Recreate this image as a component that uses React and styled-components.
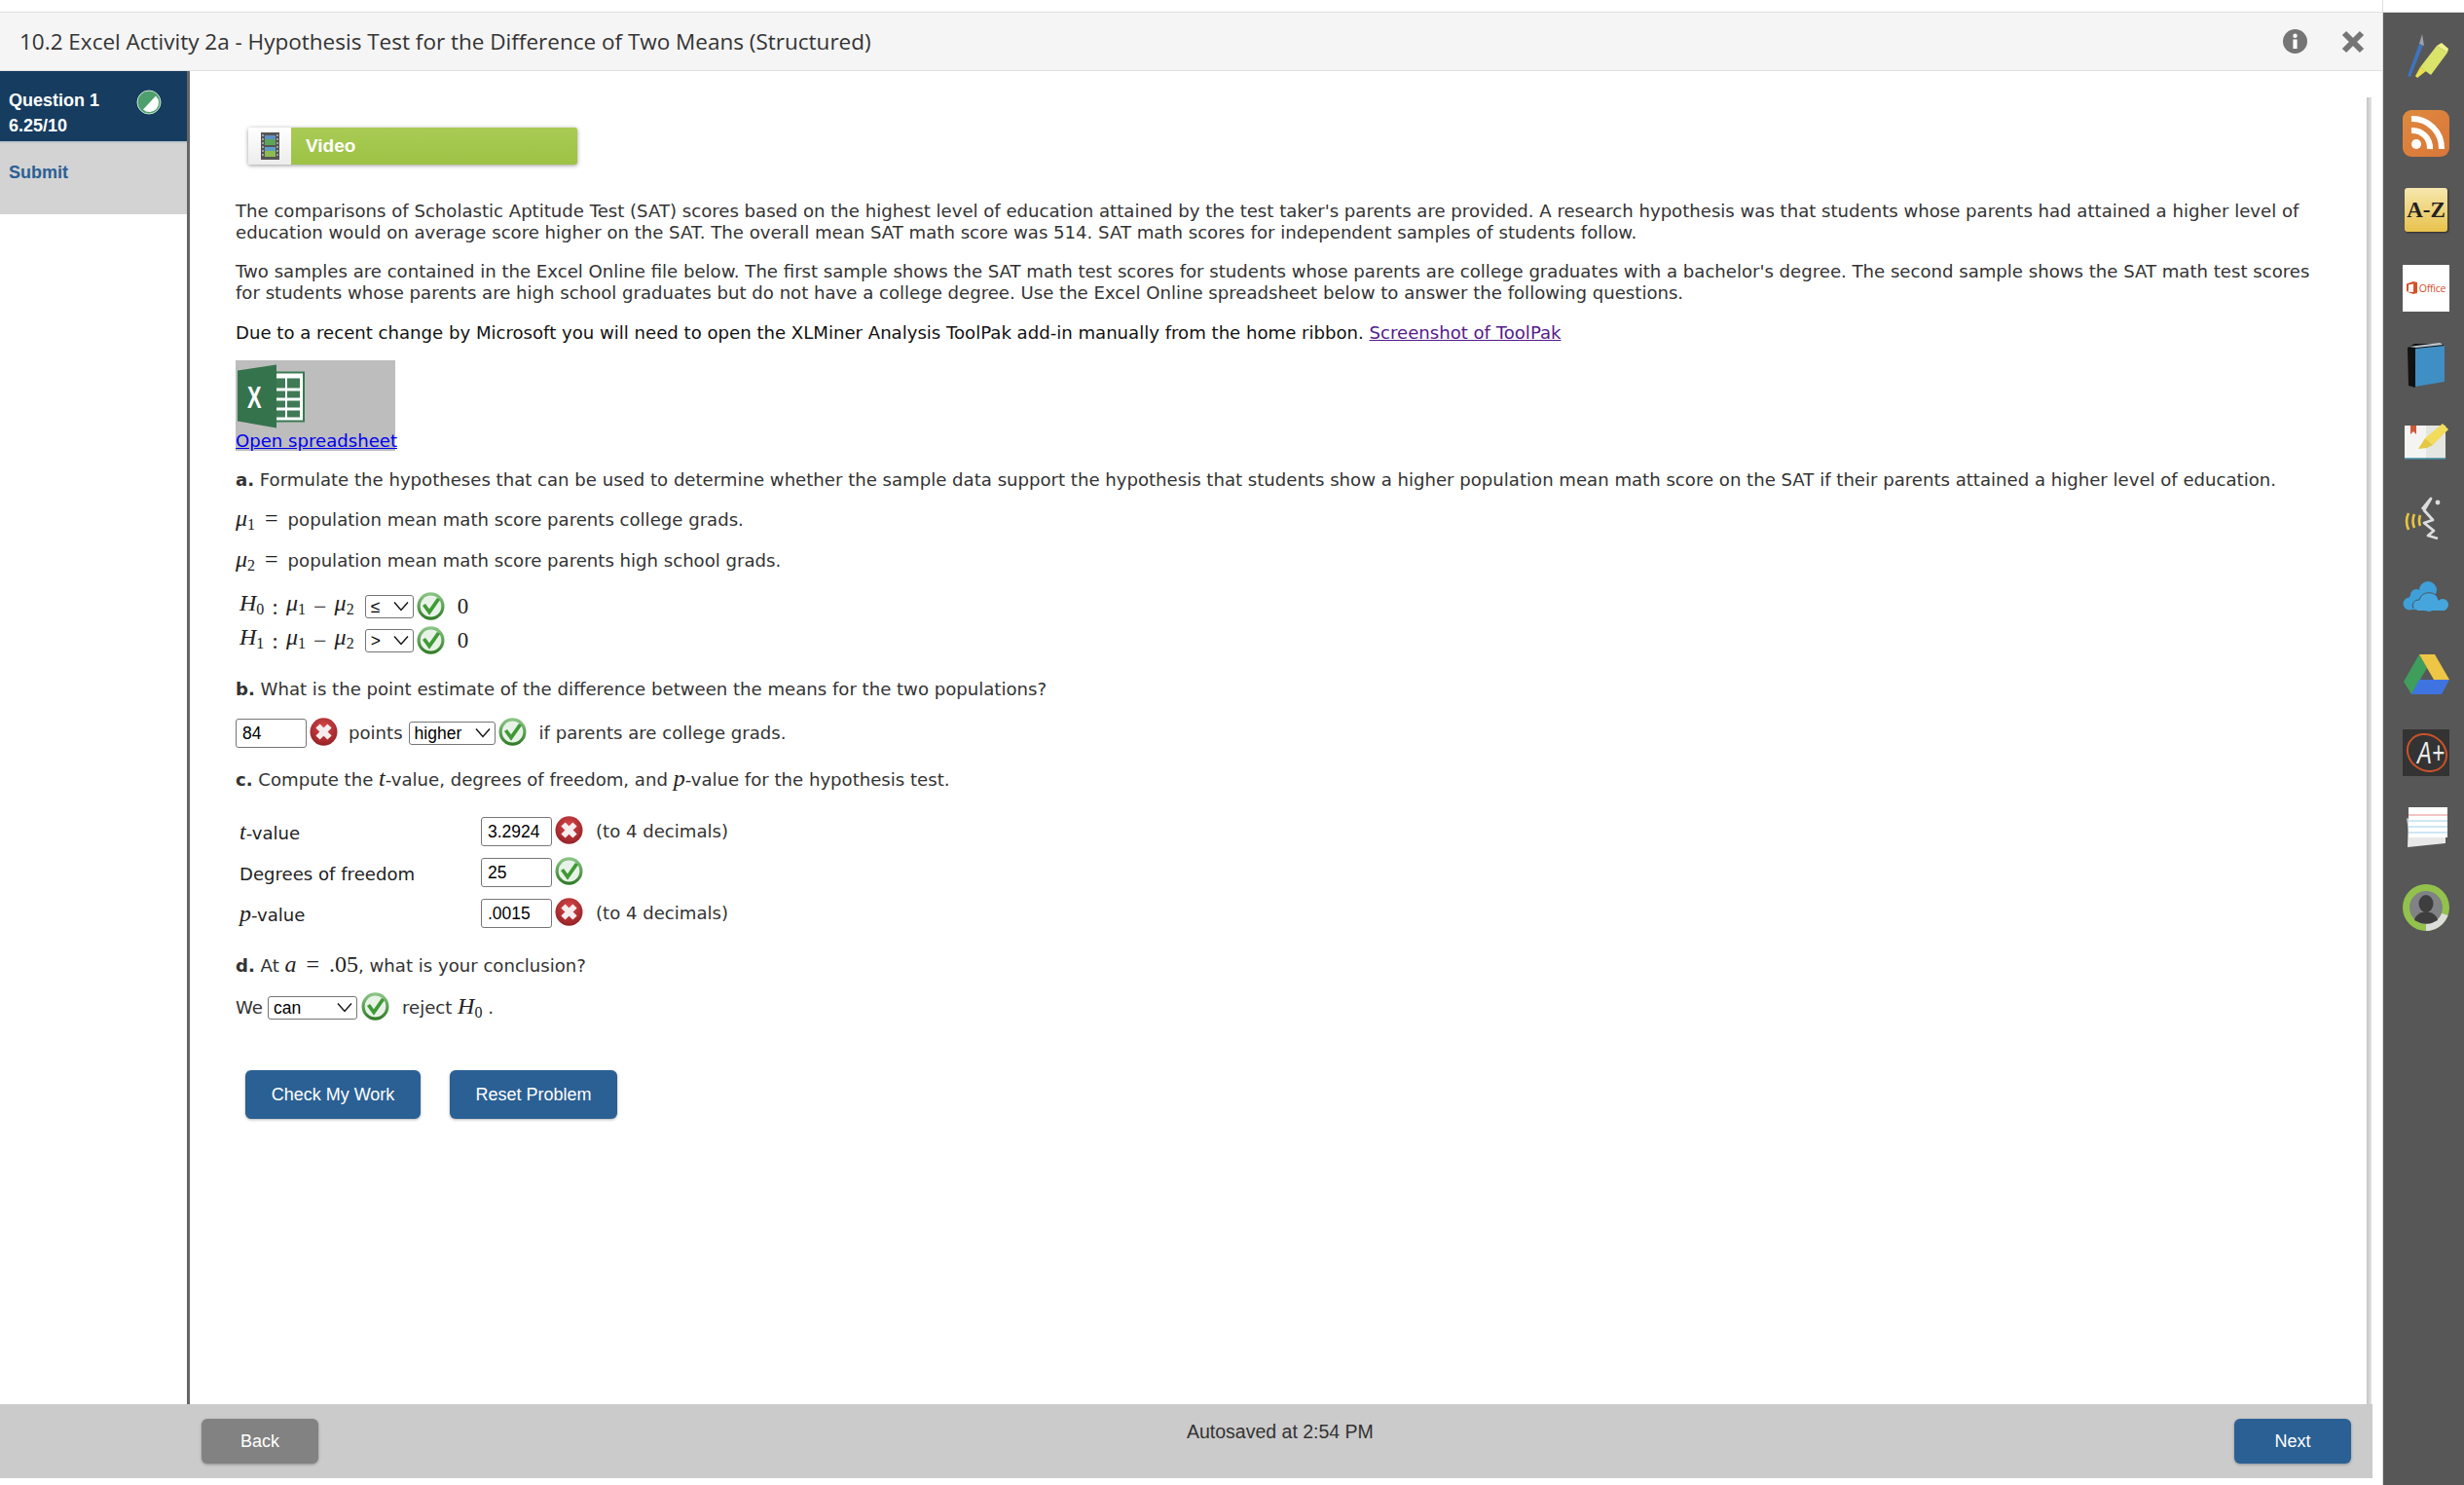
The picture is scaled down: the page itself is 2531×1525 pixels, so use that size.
import React from "react"
import styled, { createGlobalStyle } from "styled-components"

const GlobalStyle = createGlobalStyle`
html, body {
    margin: 0;
    padding: 0;
    background: #fff;
}
#root {
    height: 1525px;
}
`

const Page = styled.div`
display: flex;
width: 2531px;
height: 1525px;
overflow: hidden;
font-family: "DejaVu Sans", Verdana, sans-serif;
color: #333;
`
const Main = styled.div`
display: flex;
flex-direction: column;
width: 2447px;
padding-top: 12px;
box-sizing: border-box;
`
const TitleBar = styled.header`
display: flex;
align-items: center;
height: 61px;
box-sizing: border-box;
padding: 0 18px 0 20px;
background: #f5f5f5;
border-top: 1px solid #e0e0e0;
border-bottom: 1px solid #e0e0e0;
`
const Title = styled.h1`
flex: 1;
margin: 0;
font-family: "Open Sans", sans-serif;
font-size: 22.5px;
font-weight: 400;
color: #333;
`
const TitleActions = styled.div`
display: flex;
align-items: center;
gap: 35px;
`
const Body = styled.div`
flex: 1;
display: flex;
min-height: 0;
padding-right: 10px;
`
const Sidebar = styled.nav`
width: 192px;
border-right: 3px solid #666;
flex-shrink: 0;
`
const QuestionTab = styled.div`
position: relative;
height: 74px;
box-sizing: border-box;
padding: 17px 0 0 9px;
background: #163c60;
border-bottom: 2px solid #bdc5cc;
color: #fff;
font-family: "Liberation Sans", Arial, sans-serif;
font-size: 18px;
font-weight: 700;
line-height: 26px;
`
const TabStatus = styled.span`
position: absolute;
left: 140px;
top: 19px;
display: flex;
`
const SubmitTab = styled.div`
height: 73px;
box-sizing: border-box;
padding: 19px 0 0 9px;
background: #d3d3d3;
color: #2a6094;
font-family: "Liberation Sans", Arial, sans-serif;
font-size: 18px;
font-weight: 700;
line-height: 22px;
`
const Content = styled.main`
flex: 1;
min-width: 0;
padding: 58px 0 0 47px;
font-size: 18.1px;
line-height: 22px;
`
const ScrollTrack = styled.div`
width: 5px;
margin-top: 27px;
margin-right: 1px;
background: linear-gradient(to right, #c4c4c4, #e4e4e4);
`
const VideoButton = styled.div`
display: flex;
width: 338px;
height: 38px;
margin: 0 0 37px 13px;
border-radius: 2px;
overflow: hidden;
box-shadow: 0 1px 4px rgba(0, 0, 0, .4);
`
const VideoThumb = styled.div`
display: flex;
align-items: center;
justify-content: center;
width: 44px;
background: linear-gradient(#fff, #ececec);
`
const VideoLabel = styled.div`
flex: 1;
padding-left: 15px;
background: linear-gradient(#a9cb55, #9dc244);
color: #fff;
font-family: "Liberation Sans", Arial, sans-serif;
font-size: 19px;
font-weight: 700;
line-height: 37px;
`
const Para = styled.p`
margin: ${props => props.$top}px 0 0;
width: 2140px;
color: ${props => props.$dark ? "#111" : "#333"};
min-height: 22px;
`
const Visited = styled.a`
color: #551a8b;
text-decoration: underline;
`
const ExcelLink = styled.a`
display: block;
width: 164px;
height: 93px;
margin-top: 17px;
background: #bdbdbd;
color: #0000ee;
text-decoration: underline;
white-space: nowrap;
line-height: 24px;
`
const ExcelIcon = styled.svg`
display: block;
margin-left: 2px;
padding-top: 3px;
`
const MathText = styled.span`
font-family: "Liberation Serif", "Times New Roman", serif;
font-size: 24px;
line-height: 0;
color: #222;
font-style: ${props => props.$plain ? "normal" : "italic"};
`
const Sub = styled.sub`
font-style: normal;
font-size: 16px;
line-height: 0;
vertical-align: -4px;
`
const MathGap = styled.span`
font-family: "Liberation Serif", "Times New Roman", serif;
font-size: 24px;
line-height: 0;
font-style: normal;
margin: 0 ${props => props.$gap || 10}px;
color: #222;
`
const HypoRow = styled.div`
display: flex;
align-items: center;
height: 35px;
padding-left: 4px;
margin-top: ${props => props.$top || 0}px;
`
const ZeroValue = styled.span`
margin-left: 13px;
font-family: "Liberation Serif", "Times New Roman", serif;
font-size: 23px;
color: #222;
`
const AnswerRow = styled.div`
display: flex;
align-items: center;
height: ${props => props.$height}px;
margin-top: ${props => props.$top}px;
`
const SelectWrap = styled.span`
position: relative;
display: inline-flex;
width: ${props => props.$width}px;
height: 24px;
margin: ${props => props.$margin || "0"};
flex-shrink: 0;
`
const Select = styled.select`
appearance: none;
width: 100%;
height: 100%;
box-sizing: border-box;
padding: 0 0 0 5px;
background: #fff;
border: 1px solid #767676;
border-radius: 3px;
color: #000;
font-family: "Liberation Sans", Arial, sans-serif;
font-size: 17.5px;
`
const Chevron = styled.svg`
position: absolute;
right: 5px;
top: 6px;
pointer-events: none;
`
const Input = styled.input`
width: 73px;
height: 30px;
box-sizing: border-box;
padding: 0 6px;
border: 1px solid #767676;
border-radius: 3px;
color: #000;
font-family: "Liberation Sans", Arial, sans-serif;
font-size: 17.5px;
flex-shrink: 0;
`
const Mark = styled.svg`
display: block;
flex-shrink: 0;
margin-left: ${props => props.$left || 0}px;
margin-top: ${props => props.$rise ? -4 : 0}px;
`
const Words = styled.span`
margin-left: ${props => props.$left}px;
white-space: nowrap;
`
const ScoreTable = styled.div`
display: grid;
grid-template-columns: 252px 73px 32px auto;
grid-auto-rows: 30px;
row-gap: 12px;
align-items: center;
justify-items: start;
margin-top: 27px;
`
const ScoreLabel = styled.span`
padding: 4px 0 0 4px;
color: #222;
`
const ActionRow = styled.div`
display: flex;
gap: 30px;
margin: 52px 0 0 10px;
`
const Button = styled.button`
width: ${props => props.$width}px;
height: ${props => props.$height || 50}px;
padding: 0;
border: none;
border-radius: 6px;
background: ${props => props.$grey ? "#828282" : "#2a6094"};
box-shadow: 0 1px 3px rgba(0, 0, 0, .3);
color: #fff;
font-family: "Liberation Sans", Arial, sans-serif;
font-size: 18px;
`
const Footer = styled.footer`
display: flex;
align-items: flex-start;
justify-content: space-between;
height: 76px;
box-sizing: border-box;
margin-right: 10px;
padding: 15px 22px 0 207px;
background: #cbcbcb;
position: relative;
`
const Autosaved = styled.div`
position: absolute;
left: 1219px;
top: 17px;
font-family: "Liberation Sans", Arial, sans-serif;
font-size: 19.5px;
color: #333;
`
const BottomGap = styled.div`
height: 7px;
`
const Rail = styled.aside`
width: 84px;
border-left: 1px solid #ddd;
padding-top: 12px;
box-sizing: border-box;
`
const RailInner = styled.div`
display: flex;
flex-direction: column;
align-items: center;
gap: 31.55px;
height: 100%;
box-sizing: border-box;
padding: 20px 0 0 5px;
background: #575757;
border-top: 1px solid #ddd;
`
const RailIcon = styled.svg`
display: block;
width: 48px;
height: 48px;
flex-shrink: 0;
`
const AzTile = styled.div`
width: 44px;
height: 45px;
margin: 1px 0 2px;
flex-shrink: 0;
border-radius: 3px;
background: linear-gradient(#f6e7ae, #e8c24c);
box-shadow: 1px 1px 2px rgba(0, 0, 0, .5);
color: #222;
font-family: "Liberation Serif", serif;
font-size: 23px;
font-weight: 700;
line-height: 45px;
text-align: center;
`
const OfficeTile = styled.div`
display: flex;
align-items: center;
justify-content: center;
gap: 2px;
width: 48px;
height: 48px;
flex-shrink: 0;
background: #fff;
color: #d8502a;
font-family: "Open Sans", sans-serif;
font-size: 10.5px;
letter-spacing: -.2px;
`

const Check = (props) => (
    <Mark width="29" height="29" viewBox="0 0 29 29" $left={props.left} $rise={props.rise}>
        <defs>
            <linearGradient id="okRing" x1="0" y1="0" x2="0" y2="1">
                <stop offset="0" stopColor="#8fc78a" />
                <stop offset="1" stopColor="#2e7a24" />
            </linearGradient>
        </defs>
        <ellipse cx="14.5" cy="14.5" rx="14" ry="14.3" fill="url(#okRing)" />
        <ellipse cx="14.5" cy="14.5" rx="10.8" ry="11.1" fill="#e8f3e8" />
        <path d="M7.5 13 L13 20.5 L22.5 7" fill="none" stroke="#3f9a35" strokeWidth="3.8" />
    </Mark>
)

const Cross = (props) => (
    <Mark width="29" height="29" viewBox="0 0 29 29" $left={props.left} $rise={props.rise}>
        <defs>
            <radialGradient id="noFill" cx=".5" cy=".35" r=".75">
                <stop offset="0" stopColor="#d8484c" />
                <stop offset="1" stopColor="#8c1c20" />
            </radialGradient>
        </defs>
        <ellipse cx="14.5" cy="14.5" rx="14" ry="14.3" fill="url(#noFill)" />
        <path d="M8.5 8.5 L20.5 20.5 M20.5 8.5 L8.5 20.5" stroke="#f6eeee" strokeWidth="6" />
    </Mark>
)

const Pick = (props) => (
    <SelectWrap $width={props.width} $margin={props.margin}>
        <Select defaultValue={props.value}>
            <option>{props.value}</option>
        </Select>
        <Chevron width="16" height="11" viewBox="0 0 16 11">
            <path d="M1 1.5 L8 9.5 L15 1.5" fill="none" stroke="#111" strokeWidth="1.4" />
        </Chevron>
    </SelectWrap>
)

const Mu = (props) => <MathText>μ<Sub>{props.n}</Sub></MathText>

const Hypothesis = (props) => (
    <HypoRow $top={props.top}>
        <MathText>H<Sub>{props.n}</Sub></MathText>
        <MathGap $gap={8}>:</MathGap>
        <Mu n="1" />
        <MathGap $gap={8}>−</MathGap>
        <Mu n="2" />
        <Pick width={50} value={props.sign} margin="0 3px 0 11px" />
        <Check />
        <ZeroValue>0</ZeroValue>
    </HypoRow>
)

const FilmIcon = () => (
    <svg width="19" height="30" viewBox="0 0 19 30">
        <rect x="0" y="1" width="19" height="28" fill="#555" />
        <rect x="4" y="4" width="11" height="10" fill="#5da55a" />
        <rect x="4" y="4" width="11" height="4" fill="#5f8fc4" />
        <rect x="4" y="16" width="11" height="10" fill="#8dbb52" />
        <rect x="4" y="16" width="11" height="4" fill="#5f9ec4" />
        <path d="M2 3 V27 M17 3 V27" stroke="#bbb" strokeWidth="1.5" strokeDasharray="2 2" />
    </svg>
)

const SpreadsheetIcon = () => (
    <ExcelIcon width="69" height="68" viewBox="0 0 69 65">
        <rect x="33" y="8" width="35" height="50" fill="#fff" stroke="#3a7a52" strokeWidth="2" />
        <path d="M38 14 H64 V24 H38 Z M38 27 H64 V34 H38 Z M38 37 H64 V44 H38 Z M38 47 H64 V54 H38 Z" fill="#3f7a55" />
        <path d="M50 12 V56" stroke="#fff" strokeWidth="2" />
        <path d="M0 6 L40 0 V65 L0 58 Z" fill="#35734d" />
        <text transform="translate(10 44) scale(.78 1.15)" fill="#fff" fontFamily="Liberation Sans, sans-serif" fontSize="28" fontWeight="700">X</text>
    </ExcelIcon>
)

const RailIcons = () => (
    <RailInner>
        <RailIcon viewBox="0 0 48 48">
            <path d="M5 45 L17 12 L21 13.5 L8 46 Z" fill="#3f73bd" />
            <path d="M17 12 L20 2 L22 14 Z" fill="#9ba3ad" />
            <path d="M35 14 L46 21 L29 44 L18 36 Z" fill="#dbe46a" />
            <path d="M35 14 L40 11 L47 17 L46 21 Z" fill="#eef08a" />
            <path d="M18 36 L24 40 L15 47 L13 45 Z" fill="#e8e050" />
        </RailIcon>
        <RailIcon viewBox="0 0 48 48">
            <defs>
                <linearGradient id="rssBg" x1="0" y1="0" x2="1" y2="1">
                    <stop offset="0" stopColor="#de8a3e" />
                    <stop offset="1" stopColor="#d9763a" />
                </linearGradient>
            </defs>
            <rect width="48" height="48" rx="9" fill="url(#rssBg)" />
            <circle cx="14" cy="35" r="5" fill="#fff" />
            <path d="M9 21 A18 18 0 0 1 28 40" fill="none" stroke="#fff" strokeWidth="6" />
            <path d="M9 9 A30 30 0 0 1 40 40" fill="none" stroke="#fff" strokeWidth="6" />
        </RailIcon>
        <AzTile>A-Z</AzTile>
        <OfficeTile>
            <svg width="11" height="13" viewBox="0 0 11 13">
                <path d="M0 2.5 L7 0 L11 1 V12 L7 13 L0 10.5 L7 11 V2.5 L2 3.5 V9.5 L0 10.5 Z" fill="#d8502a" />
            </svg>
            Office
        </OfficeTile>
        <RailIcon viewBox="0 0 48 48">
            <path d="M5 6 L12 2 L42 2 V5 L13 8 V47 L6 45 Z" fill="#111" />
            <path d="M6 5 L38 1 L42 3 L14 6 Z" fill="#b9c4cc" />
            <path d="M13 7 L43 4 V41 L13 46 Z" fill="#3f8fc4" />
        </RailIcon>
        <RailIcon viewBox="0 0 48 48">
            <path d="M2 6 H24 V40 H2 Z" fill="#f4f4f2" />
            <path d="M24 6 H44 V40 H24 Z" fill="#e4e6e2" />
            <path d="M2 40 H44" stroke="#3f8aa0" strokeWidth="1.6" />
            <path d="M8 6 H14 V15 L11 12 L8 15 Z" fill="#d0583a" />
            <path d="M41 4 L47 10 L31 26 L23 19 Z" fill="#f2dc5c" />
            <path d="M23 19 L31 26 L25 29 L16 30 Z" fill="#e4c844" />
        </RailIcon>
        <RailIcon viewBox="0 0 48 48">
            <path d="M20 13 L29 2 L22 14 L31 24 L22 27 L32 35 L26 40 L36 43" fill="none" stroke="#ddd" strokeWidth="2.8" strokeLinejoin="round" />
            <circle cx="36" cy="6" r="2.4" fill="#ddd" />
            <path d="M6 17 Q2 25 6 34 M12 18 Q9 25 12 32 M18 19 Q16 25 18 30" fill="none" stroke="#e8c640" strokeWidth="2.6" />
        </RailIcon>
        <RailIcon viewBox="0 0 48 48">
            <g fill="#3f9fd9">
                <circle cx="26" cy="16" r="9" />
                <circle cx="14" cy="21" r="6" />
                <circle cx="7" cy="30" r="6.5" />
                <rect x="7" y="22" width="26" height="14" />
            </g>
            <g fill="#46a5dd">
                <circle cx="27" cy="28" r="10" />
                <circle cx="41" cy="31" r="6" />
                <circle cx="17" cy="31" r="5.5" />
                <rect x="14" y="30" width="30" height="7" rx="2" />
            </g>
            <path d="M11 35 A6 6 0 0 1 17 26 A10.5 10.5 0 0 1 37 26" fill="none" stroke="#4a5560" strokeWidth="1" />
        </RailIcon>
        <RailIcon viewBox="0 0 48 48">
            <path d="M17 3 L1 31 L9 44 L25 17 Z" fill="#3f9e5c" />
            <path d="M17 3 H33 L48 29 H32 Z" fill="#eec645" />
            <path d="M9 44 L17 29 H48 L40 44 Z" fill="#3f74e0" />
        </RailIcon>
        <RailIcon viewBox="0 0 48 48">
            <rect width="48" height="48" fill="#333" />
            <ellipse cx="25" cy="24" rx="21" ry="18" transform="rotate(35 25 24)" fill="none" stroke="#c9522a" strokeWidth="2" />
            <text transform="translate(15 35) scale(.72 1)" fill="#eee" fontFamily="Liberation Sans, sans-serif" fontSize="31" fontStyle="italic">A+</text>
        </RailIcon>
        <RailIcon viewBox="0 0 48 48">
            <path d="M4 12 L8 40 L44 36 V30 Z" fill="#ccc" />
            <path d="M6 10 L5 42 L44 38 V30 Z" fill="#e8e8e8" />
            <rect x="6" y="1" width="40" height="31" fill="#fff" />
            <path d="M6 9 H46" stroke="#f0b0b0" strokeWidth="1.4" />
            <path d="M6 15 H46 M6 21 H46 M6 27 H46" stroke="#bfe0f2" strokeWidth="1.4" />
        </RailIcon>
        <RailIcon viewBox="0 0 48 48">
            <circle cx="24" cy="24" r="24" fill="#92c24c" />
            <path d="M46.5 32 A24 24 0 0 1 24 48 V41 A17 17 0 0 0 40 30 Z" fill="#ddd" />
            <circle cx="24" cy="24" r="17" fill="#808285" />
            <ellipse cx="24" cy="20" rx="7.5" ry="9" fill="#3e3e3e" />
            <path d="M12 37 Q13 30 24 28 Q35 30 36 37 Q24 44 12 37 Z" fill="#3e3e3e" />
        </RailIcon>
    </RailInner>
)

const App = () => {
    return(
        <Page>
            <GlobalStyle />
            <Main>
                <TitleBar>
                    <Title>10.2 Excel Activity 2a - Hypothesis Test for the Difference of Two Means (Structured)</Title>
                    <TitleActions>
                        <svg width="25" height="25" viewBox="0 0 25 25">
                            <circle cx="12.5" cy="12.5" r="12.5" fill="#757575" />
                            <circle cx="12.5" cy="6.8" r="2.2" fill="#fff" />
                            <rect x="10.4" y="10.5" width="4.2" height="9.5" fill="#fff" />
                        </svg>
                        <svg width="24" height="24" viewBox="0 0 24 24">
                            <path d="M3 3 L21 21 M21 3 L3 21" stroke="#757575" strokeWidth="6" />
                        </svg>
                    </TitleActions>
                </TitleBar>
                <Body>
                    <Sidebar>
                        <QuestionTab>
                            Question 1<br />6.25/10
                            <TabStatus>
                                <svg width="26" height="26" viewBox="0 0 26 26">
                                    <circle cx="13" cy="13" r="12" fill="#4d9f6d" stroke="#cfe6d6" strokeWidth="1" />
                                    <path d="M20 6.5 A9.5 9.5 0 0 1 7 20.5 Z" fill="#fff" />
                                </svg>
                            </TabStatus>
                        </QuestionTab>
                        <SubmitTab>Submit</SubmitTab>
                    </Sidebar>
                    <Content>
                        <VideoButton>
                            <VideoThumb><FilmIcon /></VideoThumb>
                            <VideoLabel>Video</VideoLabel>
                        </VideoButton>
                        <Para $top={0}>The comparisons of Scholastic Aptitude Test (SAT) scores based on the highest level of education attained by the test taker's parents are provided. A research hypothesis was that students whose parents had attained a higher level of education would on average score higher on the SAT. The overall mean SAT math score was 514. SAT math scores for independent samples of students follow.</Para>
                        <Para $top={18}>Two samples are contained in the Excel Online file below. The first sample shows the SAT math test scores for students whose parents are college graduates with a bachelor's degree. The second sample shows the SAT math test scores for students whose parents are high school graduates but do not have a college degree. Use the Excel Online spreadsheet below to answer the following questions.</Para>
                        <Para $top={19} $dark>Due to a recent change by Microsoft you will need to open the XLMiner Analysis ToolPak add-in manually from the home ribbon. <Visited href="#toolpak">Screenshot of ToolPak</Visited></Para>
                        <ExcelLink href="#spreadsheet">
                            <SpreadsheetIcon />
                            Open spreadsheet
                        </ExcelLink>
                        <Para $top={19}><b>a.</b> Formulate the hypotheses that can be used to determine whether the sample data support the hypothesis that students show a higher population mean math score on the SAT if their parents attained a higher level of education.</Para>
                        <Para $top={19}><Mu n="1" /><MathGap>=</MathGap>population mean math score parents college grads.</Para>
                        <Para $top={20}><Mu n="2" /><MathGap>=</MathGap>population mean math score parents high school grads.</Para>
                        <Hypothesis n="0" sign="≤" top={18} />
                        <Hypothesis n="1" sign=">" />
                        <Para $top={22}><b>b.</b> What is the point estimate of the difference between the means for the two populations?</Para>
                        <AnswerRow $height={30} $top={19}>
                            <Input defaultValue="84" readOnly />
                            <Cross left={3} rise />
                            <Words $left={11}>points</Words>
                            <Pick width={89} value="higher" margin="0 3px 0 6px" />
                            <Check rise />
                            <Words $left={13}>if parents are college grads.</Words>
                        </AnswerRow>
                        <Para $top={22}><b>c.</b> Compute the <MathText>t</MathText>-value, degrees of freedom, and <MathText>p</MathText>-value for the hypothesis test.</Para>
                        <ScoreTable>
                            <ScoreLabel><MathText>t</MathText>-value</ScoreLabel>
                            <Input defaultValue="3.2924" readOnly />
                            <Cross left={3} rise />
                            <Words $left={13}>(to 4 decimals)</Words>
                            <ScoreLabel>Degrees of freedom</ScoreLabel>
                            <Input defaultValue="25" readOnly />
                            <Check left={3} rise />
                            <span />
                            <ScoreLabel><MathText>p</MathText>-value</ScoreLabel>
                            <Input defaultValue=".0015" readOnly />
                            <Cross left={3} rise />
                            <Words $left={13}>(to 4 decimals)</Words>
                        </ScoreTable>
                        <Para $top={28}><b>d.</b> At <MathText>a</MathText><MathGap>=</MathGap><MathText $plain>.05</MathText>, what is your conclusion?</Para>
                        <AnswerRow $height={24} $top={20}>
                            <Words $left={0}>We</Words>
                            <Pick width={92} value="can" margin="0 4px 0 5px" />
                            <Check rise />
                            <Words $left={13}>reject <MathText>H<Sub>0</Sub></MathText> .</Words>
                        </AnswerRow>
                        <ActionRow>
                            <Button $width={180}>Check My Work</Button>
                            <Button $width={172}>Reset Problem</Button>
                        </ActionRow>
                    </Content>
                    <ScrollTrack />
                </Body>
                <Footer>
                    <Button $width={120} $height={46} $grey>Back</Button>
                    <Autosaved>Autosaved at 2:54 PM</Autosaved>
                    <Button $width={120} $height={46}>Next</Button>
                </Footer>
                <BottomGap />
            </Main>
            <Rail>
                <RailIcons />
            </Rail>
        </Page>
    )
}

export default App
